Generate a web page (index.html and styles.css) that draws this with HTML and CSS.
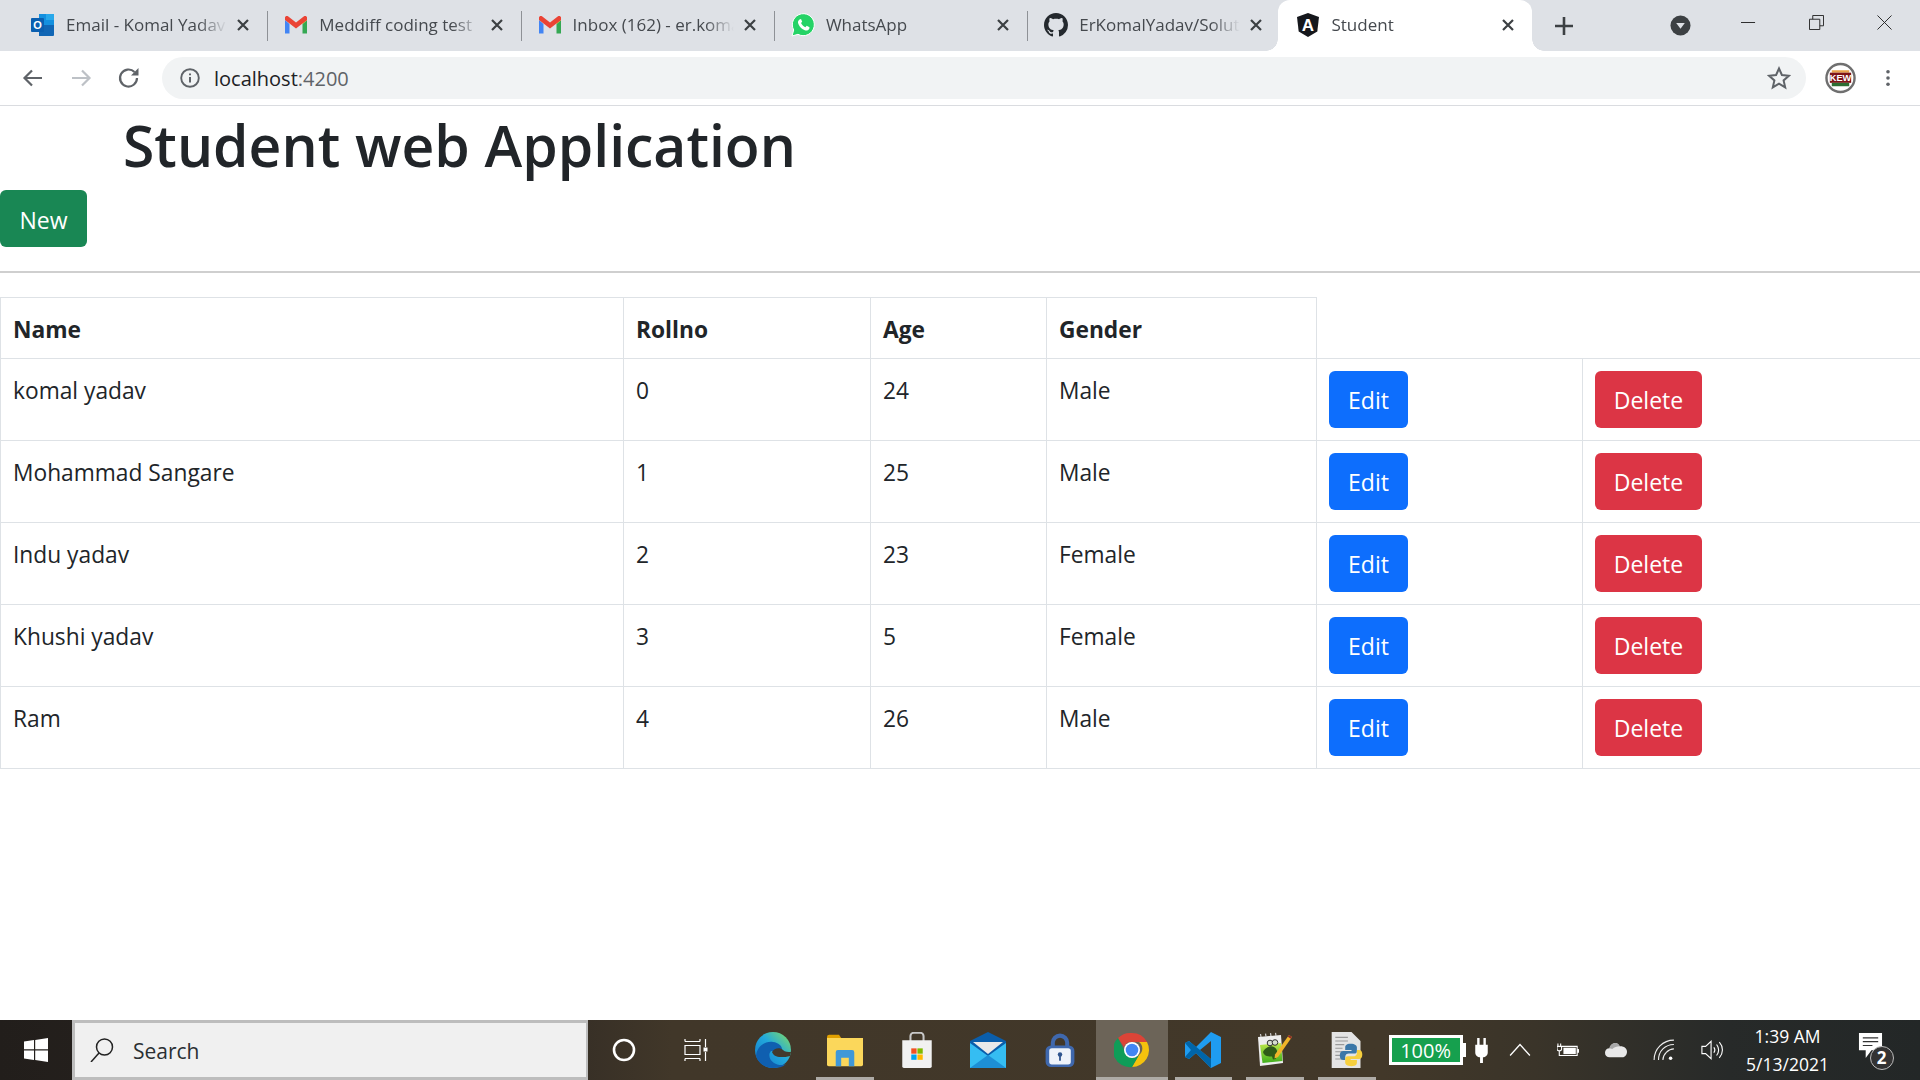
FILE: index.html
```html
<!DOCTYPE html>
<html lang="en">

<head>
  <meta charset="UTF-8">
  <meta name="viewport" content="width=device-width, initial-scale=1.0">
  <title>Student</title>

  <link rel="stylesheet" href="styles.css">
</head>

<body>
  <svg class="sprite" xmlns="http://www.w3.org/2000/svg">
    <defs>
      <linearGradient id="edge-fill" x1="0" y1="1" x2="1" y2="0">
        <stop offset="0" stop-color="#1173c9" />
        <stop offset="0.55" stop-color="#22a9dc" />
        <stop offset="1" stop-color="#86df5e" />
      </linearGradient>
      <linearGradient id="npp-fill" x1="0" y1="0" x2="0" y2="1">
        <stop offset="0" stop-color="#bfe84a" />
        <stop offset="1" stop-color="#3fae1c" />
      </linearGradient>
    </defs>
    <symbol id="i-close" viewBox="0 0 16 16">
      <path d="M3 3l10 10M13 3L3 13" fill="none" stroke="#3c4043" stroke-width="2.2" />
    </symbol>
    <symbol id="i-gmail" viewBox="0 0 24 20">
      <path d="M1 5v13.5h4.500V9z" fill="#4285f4" />
      <path d="M23 5v13.500h-4.500V9z" fill="#34a853" />
      <path d="M18.500 3L23 2v3l-4.500 4z" fill="#fbbc04" />
      <path d="M1 2.500C1 1 3 .5 4 1.300L12 7.500l8-6.200C21 .5 23 1 23 2.500V5l-11 8.500L1 5z" fill="#ea4335" />
    </symbol>
  </svg>

  <header class="tab-strip">
    <div class="tab">
      <svg class="tab-icon" viewBox="0 0 24 24">
        <path d="M8 1h14a1 1 0 0 1 1 1v10H8z" fill="#1490df" />
        <path d="M8 12h15v10a1 1 0 0 1-1 1H8z" fill="#1066b5" />
        <path d="M15 1h8v6h-8z" fill="#28a8ea" />
        <rect x="0" y="5" width="13" height="14" rx="1" fill="#0a5fb0" />
        <text x="6.500" y="16" class="icon-letter">O</text>
      </svg>
      <span class="tab-title">Email - Komal Yadav</span>
      <svg class="tab-close"><use href="#i-close" /></svg>
    </div>
    <div class="tab">
      <svg class="tab-icon"><use href="#i-gmail" /></svg>
      <span class="tab-title">Meddiff coding test</span>
      <svg class="tab-close"><use href="#i-close" /></svg>
    </div>
    <div class="tab">
      <svg class="tab-icon"><use href="#i-gmail" /></svg>
      <span class="tab-title">Inbox (162) - er.komal</span>
      <svg class="tab-close"><use href="#i-close" /></svg>
    </div>
    <div class="tab">
      <svg class="tab-icon" viewBox="0 0 24 24">
        <path d="M1 23l1.700-6A11 11 0 1 1 7 21.300z" fill="#25d366" stroke="#fff" stroke-width="1" />
        <path d="M8.500 6.500c-1.500 1-2 2.800-1 4.800 1.200 2.700 3.500 5 6.300 6 2 .7 3.700 0 4.500-1.500l.2-1.600-2.800-1.400-1.300 1.500c-2-.8-3.500-2.300-4.400-4.200l1.200-1.300-1.200-2.900z" fill="#fff" />
      </svg>
      <span class="tab-title">WhatsApp</span>
      <svg class="tab-close"><use href="#i-close" /></svg>
    </div>
    <div class="tab">
      <svg class="tab-icon" viewBox="0 0 16 16">
        <path fill="#24292e" d="M8 0C3.580 0 0 3.580 0 8c0 3.540 2.290 6.530 5.470 7.590.4.070.55-.17.55-.38 0-.19-.01-.82-.01-1.490-2.010.37-2.530-.49-2.690-.94-.09-.23-.48-.94-.82-1.130-.28-.15-.68-.52-.01-.53.63-.01 1.080.58 1.230.82.720 1.210 1.870.87 2.330.66.070-.52.280-.87.510-1.070-1.780-.2-3.640-.89-3.640-3.950 0-.87.310-1.590.820-2.150-.08-.2-.36-1.020.08-2.120 0 0 .67-.21 2.200.82.640-.18 1.320-.27 2-.27s1.360.09 2 .27c1.530-1.040 2.200-.82 2.200-.82.44 1.100.16 1.920.08 2.120.51.56.82 1.270.82 2.150 0 3.070-1.870 3.750-3.650 3.950.29.25.54.73.54 1.480 0 1.070-.01 1.930-.01 2.200 0 .21.150.46.550.38A8.013 8.013 0 0 0 16 8c0-4.420-3.580-8-8-8z" />
      </svg>
      <span class="tab-title">ErKomalYadav/Solution</span>
      <svg class="tab-close"><use href="#i-close" /></svg>
    </div>
    <div class="tab active">
      <svg class="tab-icon" viewBox="0 0 24 24">
        <path d="M12 0L1 4l1.700 14.500L12 24l9.300-5.500L23 4z" fill="#15171c" />
        <text x="12" y="18" class="icon-letter large">A</text>
      </svg>
      <span class="tab-title">Student</span>
      <svg class="tab-close"><use href="#i-close" /></svg>
    </div>
    <div class="new-tab">
      <svg viewBox="0 0 18 18" class="new-tab-icon">
        <path d="M9 0v18M0 9h18" stroke="#3c4043" stroke-width="2.600" fill="none" />
      </svg>
    </div>
    <div class="win-controls">
      <svg class="tab-search" viewBox="0 0 22 22">
        <circle cx="11" cy="11" r="10.500" fill="#3c4043" />
        <path d="M6.500 8.500h9L11 14.500z" fill="#dee1e6" />
      </svg>
      <div class="win-btn">
        <svg viewBox="0 0 16 16" class="win-icon"><path d="M0 8h15" stroke="#222" fill="none" /></svg>
      </div>
      <div class="win-btn">
        <svg viewBox="0 0 16 16" class="win-icon"><path d="M.5 4.500h11v11H.5zM4 4.500v-4h11.500v11H11.500" stroke="#222" fill="none" /></svg>
      </div>
      <div class="win-btn">
        <svg viewBox="0 0 16 16" class="win-icon"><path d="M.5.500l15 15M15.500.500l-15 15" stroke="#222" fill="none" /></svg>
      </div>
    </div>
  </header>

  <nav class="toolbar">
    <div class="nav-btn">
      <svg viewBox="0 0 24 24" class="nav-icon"><path d="M21 12H4M11 4.500L3.500 12l7.500 7.500" fill="none" stroke="#5f6368" stroke-width="2.200" /></svg>
    </div>
    <div class="nav-btn">
      <svg viewBox="0 0 24 24" class="nav-icon"><path d="M3 12h17M13 4.500l7.500 7.500-7.500 7.500" fill="none" stroke="#bdc1c6" stroke-width="2.200" /></svg>
    </div>
    <div class="nav-btn">
      <svg viewBox="0 0 24 24" class="nav-icon"><path d="M20 12a8.500 8.500 0 1 1-2.500-6" fill="none" stroke="#5f6368" stroke-width="2.200" /><path d="M21.500 2v7.500H14z" fill="#5f6368" /></svg>
    </div>
    <div class="omnibox">
      <svg viewBox="0 0 20 20" class="info-icon">
        <circle cx="10" cy="10" r="8.800" fill="none" stroke="#5f6368" stroke-width="1.900" />
        <path d="M10 9v5.500M10 5.500v1.800" stroke="#5f6368" stroke-width="2" fill="none" />
      </svg>
      <span class="url">localhost<span class="url-port">:4200</span></span>
      <svg viewBox="0 0 24 24" class="star-icon">
        <path d="M12 2.500l2.900 6.500 7 .7-5.300 4.700 1.600 7-6.200-3.700-6.200 3.700 1.600-7L2.100 9.700l7-.7z" fill="none" stroke="#5f6368" stroke-width="2" />
      </svg>
    </div>
    <svg viewBox="0 0 32 32" class="avatar">
      <circle cx="16" cy="16" r="14.500" fill="#fff" stroke="#6f6f6f" stroke-width="2.500" />
      <path d="M7 8h18v2.500H7z" fill="#e8a24a" />
      <path d="M5 10.500h22v10.500H5z" fill="#7e1418" />
      <path d="M7 21h18v3.500H7z" fill="#2d6e33" />
      <text x="16" y="19.500" class="avatar-text">KEW</text>
    </svg>
    <svg viewBox="0 0 6 20" class="menu-icon">
      <circle cx="3" cy="3" r="2" fill="#5f6368" />
      <circle cx="3" cy="10" r="2" fill="#5f6368" />
      <circle cx="3" cy="17" r="2" fill="#5f6368" />
    </svg>
  </nav>

  <main class="page">
    <h1 class="title">Student web Application</h1>
    <button class="btn btn-new">New</button>
    <hr class="rule">
    <table class="students">
      <colgroup>
        <col class="col-name">
        <col class="col-roll">
        <col class="col-age">
        <col class="col-gender">
        <col class="col-edit">
        <col class="col-delete">
      </colgroup>
      <thead>
        <tr>
          <th>Name</th>
          <th>Rollno</th>
          <th>Age</th>
          <th>Gender</th>
        </tr>
      </thead>
      <tbody>
        <tr>
          <td>komal yadav</td>
          <td>0</td>
          <td>24</td>
          <td>Male</td>
          <td><button class="btn btn-edit">Edit</button></td>
          <td><button class="btn btn-delete">Delete</button></td>
        </tr>
        <tr>
          <td>Mohammad Sangare</td>
          <td>1</td>
          <td>25</td>
          <td>Male</td>
          <td><button class="btn btn-edit">Edit</button></td>
          <td><button class="btn btn-delete">Delete</button></td>
        </tr>
        <tr>
          <td>Indu yadav</td>
          <td>2</td>
          <td>23</td>
          <td>Female</td>
          <td><button class="btn btn-edit">Edit</button></td>
          <td><button class="btn btn-delete">Delete</button></td>
        </tr>
        <tr>
          <td>Khushi yadav</td>
          <td>3</td>
          <td>5</td>
          <td>Female</td>
          <td><button class="btn btn-edit">Edit</button></td>
          <td><button class="btn btn-delete">Delete</button></td>
        </tr>
        <tr>
          <td>Ram</td>
          <td>4</td>
          <td>26</td>
          <td>Male</td>
          <td><button class="btn btn-edit">Edit</button></td>
          <td><button class="btn btn-delete">Delete</button></td>
        </tr>
      </tbody>
    </table>
  </main>

  <footer class="taskbar">
    <div class="start">
      <svg viewBox="0 0 24 24" class="start-icon">
        <path d="M0 3.500l10-1.400V11.200H0zM11.200 1.900L24 0v11.200H11.200zM0 12.600h10v9.300L0 20.500zM11.200 12.600H24V24l-12.800-1.900z" fill="#fff" />
      </svg>
    </div>
    <div class="search-box">
      <svg viewBox="0 0 24 24" class="search-icon">
        <circle cx="14.500" cy="9" r="8" fill="none" stroke="#222" stroke-width="1.500" />
        <path d="M9 15L1 24" stroke="#222" stroke-width="1.500" fill="none" />
      </svg>
      <span class="search-text">Search</span>
    </div>

    <div class="task-slot">
      <svg viewBox="0 0 24 24" class="task-icon"><circle cx="12" cy="12" r="10" fill="none" stroke="#fff" stroke-width="2.600" /></svg>
    </div>
    <div class="task-slot">
      <svg viewBox="0 0 24 24" class="task-icon">
        <path d="M1 3.500h15M1 1v2.500M16 1v2.500M1 7.500h15v9H1zM1 20.500h15M1 20.500V23M16 20.500V23M21.500 1v8M21.500 14v9" fill="none" stroke="#fff" stroke-width="1.200" />
        <rect x="19.500" y="9.500" width="4" height="4" fill="#fff" />
      </svg>
    </div>
    <div class="task-slot pinned-start">
      <svg viewBox="0 0 36 36" class="task-icon large">
        <circle cx="18" cy="18" r="18" fill="url(#edge-fill)" />
        <path d="M1 24C2 14 10 9 18 10c6 .5 10 5 9 9H16c-3 3-2 9 3 12 3 2 8 3 12 1-3 3-8 4-13 4C10 36 3 31 1 24z" fill="#0f5fb0" />
        <path d="M17 20c2-4 8-5 11-2 2 2 5 2 8 2l-1 4c-3 1-6 1-9 1-5 0-8-2-9-5z" fill="#433a2c" />
      </svg>
    </div>
    <div class="task-slot running">
      <svg viewBox="0 0 33 30" class="task-icon large">
        <path d="M0 3a2 2 0 0 1 2-2h9l2 3H0z" fill="#e0a000" />
        <path d="M0 4h33v24a2 2 0 0 1-2 2H2a2 2 0 0 1-2-2z" fill="#fbd75b" />
        <path d="M8 30V17a2 2 0 0 1 2-2h13a2 2 0 0 1 2 2v13h-5v-8h-7v8z" fill="#3f98d8" />
      </svg>
    </div>
    <div class="task-slot">
      <svg viewBox="0 0 36 44" class="task-icon large">
        <path d="M10 12V5a4 4 0 0 1 4-4h8a4 4 0 0 1 4 4v7" fill="none" stroke="#c8c8c8" stroke-width="2.500" />
        <path d="M0 10h36v32a2 2 0 0 1-2 2H2a2 2 0 0 1-2-2z" fill="#f1f1f1" />
        <rect x="11" y="20" width="6.500" height="6.500" fill="#f25022" />
        <rect x="18.500" y="20" width="6.500" height="6.500" fill="#7fba00" />
        <rect x="11" y="27.500" width="6.500" height="6.500" fill="#00a4ef" />
        <rect x="18.500" y="27.500" width="6.500" height="6.500" fill="#ffb900" />
      </svg>
    </div>
    <div class="task-slot">
      <svg viewBox="0 0 36 36" class="task-icon large">
        <path d="M0 9L18 0l18 9v27H0z" fill="#0a5eab" />
        <path d="M3 10h30L18 22z" fill="#e9e9e9" />
        <path d="M0 11l18 13 18-13v25H0z" fill="#35bdf2" />
        <path d="M0 36l18-13 18 13z" fill="#1d8fd6" />
      </svg>
    </div>
    <div class="task-slot">
      <svg viewBox="0 0 34 40" class="task-icon large">
        <path d="M9 18v-6a8 8 0 0 1 16 0v6" fill="none" stroke="#3f68ad" stroke-width="4.500" />
        <rect x="1" y="15" width="32" height="24" rx="6" fill="#3f68ad" />
        <rect x="5" y="18" width="24" height="18" rx="3" fill="#eef3fa" />
        <circle cx="17" cy="25" r="2.500" fill="#2f558f" />
        <path d="M17 25v7" stroke="#2f558f" stroke-width="2" />
      </svg>
    </div>
    <div class="task-slot active running">
      <svg viewBox="0 0 36 36" class="task-icon large">
        <path d="M18 1a17 17 0 0 1 15 9H18a8 8 0 0 0-8 5L4 6a17 17 0 0 1 14-5z" fill="#db4437" />
        <path d="M33 10a17 17 0 0 1-15 25l7-12a8 8 0 0 0 0-13z" fill="#f4c20d" />
        <path d="M4 6l8 16a8 8 0 0 0 13 1l-7 12A17 17 0 0 1 4 6z" fill="#0f9d58" />
        <circle cx="18" cy="18" r="8" fill="#fff" />
        <circle cx="18" cy="18" r="6.300" fill="#4285f4" />
      </svg>
    </div>
    <div class="task-slot running">
      <svg viewBox="0 0 36 36" class="task-icon large">
        <path d="M26 0l10 5v26l-10 5L11 21l-7 6-4-2V11l4-2 7 6z" fill="#1f9cf0" />
        <path d="M0 11l4-2 22 18v9L11 21l-7 6-4-2 6-7z" fill="#0065a9" />
        <path d="M26 9v18l-11-9z" fill="#443a2d" />
      </svg>
    </div>
    <div class="task-slot running">
      <svg viewBox="0 0 36 36" class="task-icon large">
        <path d="M1 5L24 3l2 28-23 3z" fill="#eee" />
        <path d="M4 5l-.5-3M9 4.600l-.5-3M14 4.200l-.5-3M19 3.800l-.5-3" stroke="#ccc" stroke-width="1.200" />
        <path d="M3 13l21-2 1.500 18-20 2z" fill="url(#npp-fill)" />
        <path d="M6 20c2-4 7-7 11-5 4 2 4 7 1 9l1 3-3 .5-1-3c-3 0-8 0-9-4.500z" fill="#2f5a18" />
        <circle cx="13" cy="11" r="2.800" fill="#d8dfd0" stroke="#333" stroke-width="1" />
        <circle cx="18" cy="10.500" r="2.800" fill="#d8dfd0" stroke="#333" stroke-width="1" />
        <path d="M32 3l3 2-14 20-3.500 1.500L18 22.500z" fill="#f0b429" />
        <path d="M32 3l3 2-1.200 1.800-3-2z" fill="#8a2a2a" />
      </svg>
    </div>
    <div class="task-slot running">
      <svg viewBox="0 0 34 40" class="task-icon large">
        <path d="M0 0h22l10 10v30H0z" fill="#e4e4e4" />
        <path d="M4 6h14M4 10h14M4 14h10M4 18h8M4 22h8M4 26h8M4 30h8" stroke="#999" stroke-width="1.200" />
        <path d="M21 13c-5 0-6 2-6 4v3h7v1h-9c-3 0-4 2-4 5s1 5 4 5h2v-3c0-3 2-4 4-4h6c2 0 3-1 3-3v-4c0-2-2-4-7-4z" fill="#3b77a8" />
        <path d="M22 38c5 0 6-2 6-4v-3h-7v-1h9c3 0 4-2 4-5s-1-5-4-5h-2v3c0 3-2 4-4 4h-6c-2 0-3 1-3 3v4c0 2 2 4 7 4z" fill="#f6cf3e" />
      </svg>
    </div>

    <div class="tray">
      <div class="battery-meter">
        <span class="battery-box">100%</span>
        <span class="battery-nub"></span>
        <svg viewBox="0 0 13 26" class="plug-icon"><path d="M2 0h2.500v7h4V0H11v7h2v8c0 3-2.500 5-5 5v6H5v-6c-2.500 0-5-2-5-5V7h2z" fill="#fff" /></svg>
      </div>
      <div class="tray-slot">
        <svg viewBox="0 0 20 12" class="tray-icon"><path d="M1 11l9-10 9 10" fill="none" stroke="#fff" stroke-width="1.200" /></svg>
      </div>
      <div class="tray-slot">
        <svg viewBox="0 0 24 16" class="tray-icon">
          <path d="M5 4h17v10H5M5 6V4M4 1v3M1 1v3M0 4h5v3c0 1-1 2-2.500 2S0 8 0 7zM2.500 9v5H5" fill="none" stroke="#fff" stroke-width="1.200" />
          <rect x="7" y="5.500" width="13.500" height="7" fill="#fff" />
          <rect x="22" y="7" width="2" height="4" fill="#fff" />
        </svg>
      </div>
      <div class="tray-slot">
        <svg viewBox="0 0 24 16" class="tray-icon">
          <path d="M9 1c3-1.500 6 0 7 3 4-.5 8 2 8 6 0 3-2 6-5 6H5c-3 0-5-2-5-5s2-5 5-5c0-2 2-4 4-5z" fill="#e8e8e8" />
          <path d="M9 1c3-1.500 6 0 7 3-3 0-6 1-8 3L5 6c0-2 2-4 4-5z" fill="#a8a8a8" />
        </svg>
      </div>
      <div class="tray-slot">
        <svg viewBox="0 0 20 20" class="tray-icon">
          <path d="M1 19C1 9 9 1 19 1M5 19c0-8 6-14 14-14M9 19c0-5 5-10 10-10" fill="none" stroke="#eee" stroke-width="1" />
          <circle cx="16" cy="17.500" r="1.600" fill="#fff" />
        </svg>
      </div>
      <div class="tray-slot">
        <svg viewBox="0 0 24 22" class="tray-icon">
          <path d="M1 7h4l6-5.500v19L5 15H1z" fill="none" stroke="#fff" stroke-width="1.200" />
          <path d="M14 8c1.500 2 1.500 4 0 6M17 5c3 4 3 8 0 12M20 2.500c4.500 5 4.500 12 0 17" fill="none" stroke="#fff" stroke-width="1.200" />
        </svg>
      </div>
      <div class="clock">
        <span>1:39 AM</span>
        <span>5/13/2021</span>
      </div>
      <div class="notify">
        <svg viewBox="0 0 26 28" class="notify-icon">
          <path d="M1 1h24v18H14l-6 8v-8H1z" fill="#fff" />
          <path d="M5 6h16M5 10h16M5 14h10" stroke="#333" stroke-width="1.200" />
        </svg>
        <span class="notify-badge">2</span>
      </div>
    </div>
  </footer>
</body>

</html>
```

FILE: styles.css
```css
* {
  margin: 0;
  padding: 0;
  box-sizing: border-box;
}

body {
  width: 1920px;
  height: 1080px;
  display: flex;
  flex-direction: column;
  font-family: "Open Sans", "Liberation Sans", sans-serif;
  color: #212529;
  background: #fff;
  overflow: hidden;
}

.sprite {
  position: absolute;
  width: 0;
  height: 0;
}

/* browser tabs */
.tab-strip {
  display: flex;
  flex: 0 0 51px;
  padding-left: 14px;
  background: #dee1e6;
}

.tab {
  position: relative;
  display: flex;
  align-items: center;
  flex: 0 0 253.3px;
  min-width: 0;
  padding: 0 16px 2px;
  font-size: 17px;
  color: #45494e;
}

.tab+.tab::before {
  content: "";
  position: absolute;
  left: 0;
  top: 11px;
  height: 30px;
  border-left: 1px solid #8e9196;
}

.tab.active {
  margin-left: -2px;
  background: #fff;
  border-radius: 12px 12px 0 0;
}

.tab.active::before,
.tab.active::after {
  content: "";
  position: absolute;
  top: auto;
  bottom: 0;
  width: 12px;
  height: 12px;
  border: none;
}

.tab.active::before {
  left: -12px;
  background: radial-gradient(circle at 0 0, transparent 11.500px, #fff 12px);
}

.tab.active::after {
  right: -12px;
  background: radial-gradient(circle at 100% 0, transparent 11.500px, #fff 12px);
}

.tab-icon {
  flex: 0 0 24px;
  width: 24px;
  height: 24px;
  margin-left: 1px;
}

.tab.active .tab-icon {
  margin-left: 2px;
}

.tab-title {
  flex: 1;
  min-width: 0;
  margin-left: 11px;
  white-space: nowrap;
  overflow: hidden;
  -webkit-mask-image: linear-gradient(90deg, #000 82%, transparent);
  mask-image: linear-gradient(90deg, #000 82%, transparent);
}

.tab-close {
  flex: 0 0 16px;
  width: 16px;
  height: 16px;
  margin-left: 8px;
}

.icon-letter {
  font-family: "Liberation Sans", sans-serif;
  font-size: 11px;
  font-weight: 700;
  fill: #fff;
  text-anchor: middle;
}

.icon-letter.large {
  font-size: 17px;
}

.new-tab {
  display: flex;
  align-items: center;
  justify-content: center;
  flex: 0 0 64px;
}

.new-tab-icon {
  width: 18px;
  height: 18px;
}

.win-controls {
  display: flex;
  align-items: center;
  margin-left: auto;
  padding-right: 2px;
}

.tab-search {
  width: 21px;
  height: 21px;
  margin-right: 23px;
}

.win-btn {
  display: flex;
  align-items: center;
  justify-content: center;
  width: 68px;
  height: 44px;
}

.win-icon {
  width: 15px;
  height: 15px;
  margin-bottom: 6px;
}

/* address bar */
.toolbar {
  display: flex;
  align-items: center;
  flex: 0 0 55px;
  padding-left: 9px;
  border-bottom: 1px solid #dadce0;
}

.nav-btn {
  display: flex;
  align-items: center;
  justify-content: center;
  width: 48px;
  height: 48px;
}

.nav-icon {
  width: 24px;
  height: 24px;
}

.omnibox {
  display: flex;
  align-items: center;
  flex: 0 0 1644px;
  height: 42px;
  margin-left: 9px;
  padding: 0 15px 0 18px;
  background: #f1f3f4;
  border-radius: 21px;
}

.info-icon {
  width: 20px;
  height: 20px;
}

.url {
  flex: 1;
  margin-left: 14px;
  font-size: 20px;
  color: #202124;
}

.url-port {
  color: #5f6368;
}

.star-icon {
  width: 24px;
  height: 24px;
}

.avatar {
  width: 31px;
  height: 32px;
  margin-left: 19px;
}

.avatar-text {
  font-family: "Liberation Sans", sans-serif;
  font-size: 9.500px;
  font-weight: 700;
  fill: #fff;
  text-anchor: middle;
}

.menu-icon {
  width: 6px;
  height: 18px;
  margin-left: 29px;
}

/* page content */
.page {
  flex: 1;
}

.title {
  margin: 3px 0 9px;
  padding-left: 123px;
  font-size: 57px;
  font-weight: 600;
  line-height: 72px;
}

.btn {
  display: block;
  height: 57px;
  border: none;
  border-radius: 6px;
  font-family: inherit;
  font-size: 23px;
  color: #fff;
}

.btn-new {
  width: 87px;
  padding-top: 2px;
  background: #198754;
}

.btn-edit {
  width: 79px;
  background: #0d6efd;
}

.btn-delete {
  width: 107px;
  background: #dc3545;
}

.rule {
  height: 2px;
  margin: 24px 0;
  border: none;
  background: #cfcfcf;
}

.students {
  width: 1920px;
  table-layout: fixed;
  border-collapse: collapse;
  font-size: 22.750px;
  line-height: 40px;
}

.col-name {
  width: 623px;
}

.col-roll {
  width: 247px;
}

.col-age {
  width: 176px;
}

.col-gender {
  width: 270px;
}

.col-edit {
  width: 266px;
}

.col-delete {
  width: 338px;
}

.students th,
.students td {
  padding: 12px;
  border: 1px solid #dee2e6;
  text-align: left;
  vertical-align: top;
}

.students th {
  padding: 14px 12px 10px;
  font-weight: 700;
  line-height: 36px;
}

/* windows taskbar */
.taskbar {
  display: flex;
  flex: 0 0 60px;
  background: linear-gradient(90deg, #221e1b 0, #2c2723 25%, #413729 35%, #423829 72%, #3a3429 80%, #272a29 90%, #232727 100%);
}

.start {
  display: flex;
  align-items: center;
  justify-content: center;
  flex: 0 0 72px;
}

.start-icon {
  width: 24px;
  height: 24px;
}

.search-box {
  display: flex;
  align-items: center;
  flex: 0 0 516px;
  padding-left: 15px;
  background: #f0f0f0;
  border: 3px solid #bdbdbd;
  border-right-width: 2px;
}

.search-icon {
  width: 24px;
  height: 24px;
}

.search-text {
  margin: 2px 0 0 19px;
  font-size: 21px;
  color: #2a2f33;
}

.task-slot {
  display: flex;
  align-items: center;
  justify-content: center;
  position: relative;
  flex: 0 0 71.7px;
}

.task-slot.pinned-start {
  margin-left: 6px;
}

.task-slot.active {
  background: #6c6458;
}

.task-slot.running::after {
  content: "";
  position: absolute;
  left: 0;
  right: 0;
  bottom: 0;
  height: 3px;
  margin: 0 7px;
  background: #aeaba6;
}

.task-slot.active.running::after {
  margin: 0;
}

.task-icon {
  width: 24px;
  height: 24px;
}

.task-icon.large {
  width: 36px;
  height: 36px;
}

.tray {
  display: flex;
  align-items: center;
  flex: 1;
  padding-left: 6px;
  color: #fff;
}

.battery-meter {
  display: flex;
  align-items: center;
  flex: 0 0 107px;
}

.battery-box {
  flex: 0 0 74px;
  height: 30px;
  line-height: 26px;
  border: 3px solid #fff;
  background: #16a04e;
  text-align: center;
  font-size: 20px;
}

.battery-nub {
  flex: 0 0 3px;
  height: 14px;
  background: #fff;
}

.plug-icon {
  width: 13px;
  height: 25px;
  margin-left: 9px;
}

.tray-slot {
  display: flex;
  align-items: center;
  justify-content: center;
  flex: 0 0 48px;
}

.tray-icon {
  width: 22px;
  height: 22px;
}

.clock {
  display: flex;
  flex-direction: column;
  align-items: center;
  flex: 0 0 104px;
  font-size: 17.500px;
  line-height: 28px;
}

.notify {
  position: relative;
  margin-left: 18px;
  width: 36px;
  height: 36px;
}

.notify-icon {
  width: 25px;
  height: 27px;
}

.notify-badge {
  position: absolute;
  right: 0;
  bottom: -2px;
  width: 24px;
  height: 24px;
  border: 1px solid #bbb;
  border-radius: 50%;
  background: #333;
  font-size: 17px;
  font-weight: 700;
  line-height: 22px;
  text-align: center;
}
```
